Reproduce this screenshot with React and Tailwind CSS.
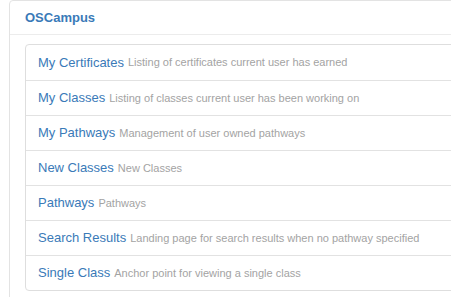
import React from 'react';

// Menu items shown in the OSCampus panel
const ITEMS = [
    { title: 'My Certificates', desc: 'Listing of certificates current user has earned' },
    { title: 'My Classes', desc: 'Listing of classes current user has been working on' },
    { title: 'My Pathways', desc: 'Management of user owned pathways' },
    { title: 'New Classes', desc: 'New Classes' },
    { title: 'Pathways', desc: 'Pathways' },
    { title: 'Search Results', desc: 'Landing page for search results when no pathway specified' },
    { title: 'Single Class', desc: 'Anchor point for viewing a single class' },
];

const App = () => {
    return (
        <div className="w-[451px] h-[297px] overflow-hidden bg-white" style={{ fontFamily: '"Liberation Sans", Arial, sans-serif' }}>
            <div className="ml-[9px] w-[480px] h-[320px] border border-[#e3e3e3] rounded-[4px] bg-white">
                <div className="h-[34px] px-[15px] flex items-center border-b border-[#ececec]">
                    <h3 className="text-[13px] font-bold text-[#3a7ab8]">OSCampus</h3>
                </div>
                <div className="pt-[9px] pl-[15px]">
                    <ul className="border border-[#dedede] rounded-[4px]">
                        {ITEMS.map((item, i) => (
                            <li
                                key={item.title}
                                className={`h-[35px] px-[12px] flex items-center whitespace-nowrap ${i > 0 ? 'border-t border-[#e2e2e2]' : ''}`}
                            >
                                <a href="#" className="text-[13px] text-[#3a7ab8]">{item.title}</a>
                                <span className="ml-[4px] text-[11px] text-[#a3a3a3]">{item.desc}</span>
                            </li>
                        ))}
                    </ul>
                </div>
            </div>
        </div>
    );
};

export default App;
